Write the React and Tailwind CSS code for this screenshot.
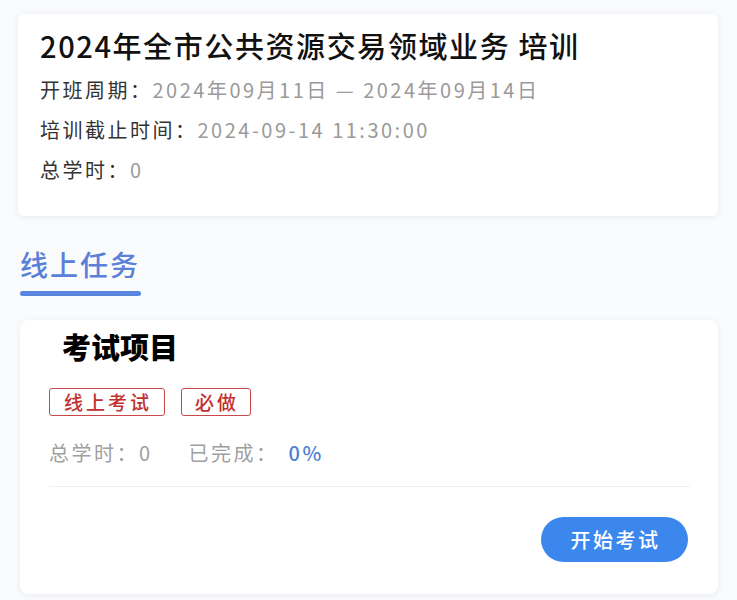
import React from "react";

const font = { fontFamily: '"Noto Sans CJK SC", "Noto Sans", sans-serif' };

export default function App() {
  return (
    <div className="w-[737px] h-[600px] bg-[#fafbfd] overflow-hidden" style={font}>
      <div className="pt-[14px] pl-[18px] pr-[19px]">
        <div className="bg-white rounded-[6px] shadow-[0_1px_6px_rgba(60,80,120,0.10)] h-[202px] pl-[22px] pt-[12px]">
          <div className="text-[29px] leading-[38px] font-medium text-[#111] tracking-[1.6px]">2024年全市公共资源交易领域业务 培训</div>
          <div className="mt-[14px] flex flex-col gap-[16px] text-[20px] leading-[24px] tracking-[2.5px]">
            <div><span className="text-[#333]">开班周期：</span><span className="text-[#9a9a9a]">2024年09月11日 — 2024年09月14日</span></div>
            <div><span className="text-[#333]">培训截止时间：</span><span className="text-[#9a9a9a]">2024-09-14 11:30:00</span></div>
            <div><span className="text-[#333]">总学时：</span><span className="text-[#9a9a9a]">0</span></div>
          </div>
        </div>
      </div>
      <div className="pl-[20px] mt-[30px]">
        <div className="inline-flex flex-col">
          <div className="text-[28px] leading-[36px] text-[#5a80d8] font-medium tracking-[2px]">线上任务</div>
          <div className="mt-[9px] h-[5px] w-[121px] rounded-full bg-[#5a86e0]" />
        </div>
      </div>
      <div className="pl-[20px] pr-[19px] mt-[24px]">
        <div className="bg-white rounded-[8px] shadow-[0_1px_6px_rgba(60,80,120,0.10)] h-[274px] pt-[8px] pl-[29px] pr-[28px]">
          <div className="pl-[13px] text-[29px] leading-[36px] font-black text-black">考试项目</div>
          <div className="mt-[24px] flex gap-[16px]">
            <span className="border border-[#c9494a] rounded-[3px] pl-[14px] pr-[12px] text-[19px] leading-[26px] text-[#c23030] font-medium tracking-[3px]">线上考试</span>
            <span className="border border-[#c9494a] rounded-[3px] pl-[13px] pr-[11px] text-[19px] leading-[26px] text-[#c23030] font-medium tracking-[3px]">必做</span>
          </div>
          <div className="mt-[24px] flex items-center text-[20px] leading-[26px] text-[#a0a0a0] tracking-[2.5px]">
            <span>总学时：0</span>
            <span className="ml-[36px]">已完成：</span>
            <span className="ml-[10px] text-[#4d7fd6] font-medium">0%</span>
          </div>
          <div className="mt-[20px] h-px bg-[#f0f0f0]" />
          <div className="mt-[30px] flex justify-end pr-[2px]">
            <button className="w-[147px] h-[45px] rounded-full bg-[#3b87ee] text-white text-[20px] font-medium tracking-[2.5px] pl-[2px]">开始考试</button>
          </div>
        </div>
      </div>
    </div>
  );
}
